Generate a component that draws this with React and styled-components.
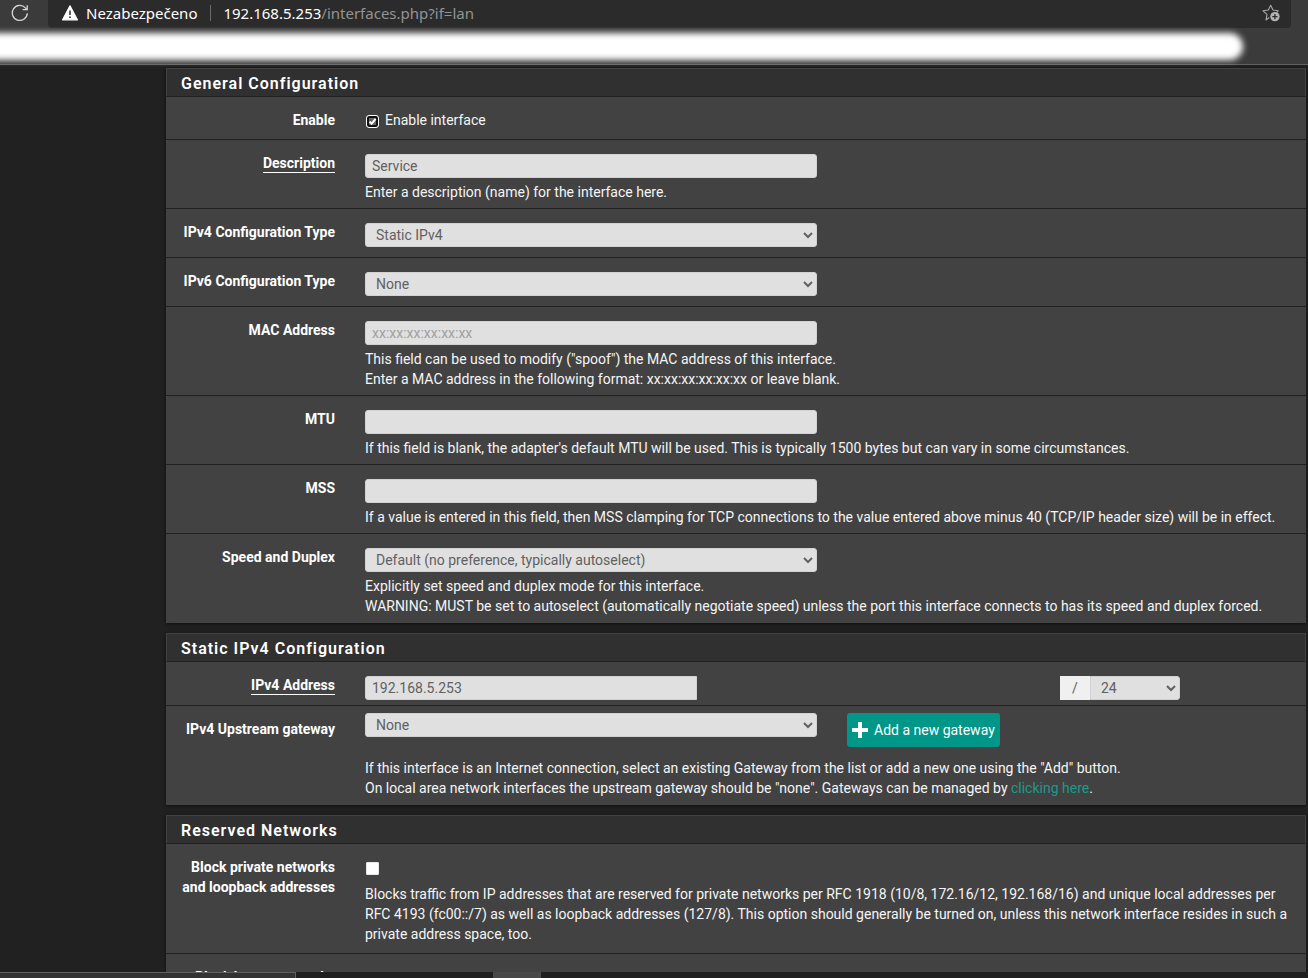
import { useState } from 'react';
import styled, { createGlobalStyle } from 'styled-components';

const App = () => {
  const [enabled, setEnabled] = useState(true);
  const [blockPrivate, setBlockPrivate] = useState(false);
  const [blockBogon, setBlockBogon] = useState(false);

  return (
    <Screen>
      <GlobalStyle />
      <Browser>
        <AddressRow>
          <ReloadBtn aria-label="Reload">
            <ReloadIcon />
          </ReloadBtn>
          <AddressBar>
            <WarningIcon />
            <Security>Nezabezpečeno</Security>
            <Url>
              <b>192.168.5.253</b>/interfaces.php?if=lan
            </Url>
            <StarBtn aria-label="Add to favorites">
              <StarIcon />
            </StarBtn>
          </AddressBar>
        </AddressRow>
        <BookmarkRow>
          <Smear />
        </BookmarkRow>
      </Browser>

      <Page>
        <Panel>
          <PanelTitle>General Configuration</PanelTitle>
          <Row>
            <Label as="span">Enable</Label>
            <CheckCell>
              <CheckLabel>
                <Checkbox
                  type="checkbox"
                  checked={enabled}
                  onChange={e => setEnabled(e.target.checked)}
                />
                {enabled && <CheckIcon />}
                Enable interface
              </CheckLabel>
            </CheckCell>
          </Row>
          <Row>
            <Label htmlFor="descr">
              <Required>Description</Required>
            </Label>
            <Cell>
              <Input id="descr" defaultValue="Service" />
            </Cell>
            <Help>Enter a description (name) for the interface here.</Help>
          </Row>
          <Row $bottom={10}>
            <Label htmlFor="type4">IPv4 Configuration Type</Label>
            <Cell>
              <Select id="type4">
                <option>Static IPv4</option>
              </Select>
            </Cell>
          </Row>
          <Row $bottom={10}>
            <Label htmlFor="type6">IPv6 Configuration Type</Label>
            <Cell>
              <Select id="type6">
                <option>None</option>
              </Select>
            </Cell>
          </Row>
          <Row>
            <Label htmlFor="mac">MAC Address</Label>
            <Cell>
              <Input id="mac" placeholder="xx:xx:xx:xx:xx:xx" />
            </Cell>
            <Help>
              This field can be used to modify ("spoof") the MAC address of this interface.
              <br />
              Enter a MAC address in the following format: xx:xx:xx:xx:xx:xx or leave blank.
            </Help>
          </Row>
          <Row>
            <Label htmlFor="mtu">MTU</Label>
            <Cell>
              <Input id="mtu" />
            </Cell>
            <Help>
              If this field is blank, the adapter's default MTU will be used. This is typically 1500
              bytes but can vary in some circumstances.
            </Help>
          </Row>
          <Row>
            <Label htmlFor="mss">MSS</Label>
            <Cell>
              <Input id="mss" />
            </Cell>
            <Help>
              If a value is entered in this field, then MSS clamping for TCP connections to the
              value entered above minus 40 (TCP/IP header size) will be in effect.
            </Help>
          </Row>
          <Row>
            <Label htmlFor="media">Speed and Duplex</Label>
            <Cell>
              <Select id="media">
                <option>Default (no preference, typically autoselect)</option>
              </Select>
            </Cell>
            <Help>
              Explicitly set speed and duplex mode for this interface.
              <br />
              WARNING: MUST be set to autoselect (automatically negotiate speed) unless the port
              this interface connects to has its speed and duplex forced.
            </Help>
          </Row>
        </Panel>

        <Panel>
          <PanelTitle>Static IPv4 Configuration</PanelTitle>
          <AddressFields>
            <Label htmlFor="ipaddr">
              <Required>IPv4 Address</Required>
            </Label>
            <Cell>
              <Input id="ipaddr" defaultValue="192.168.5.253" $square />
            </Cell>
            <SubnetCell>
              <Slash htmlFor="subnet">/</Slash>
              <Select id="subnet" $joined>
                <option>24</option>
              </Select>
            </SubnetCell>
          </AddressFields>
          <Row>
            <Label htmlFor="gateway">IPv4 Upstream gateway</Label>
            <Cell $top={7}>
              <Select id="gateway">
                <option>None</option>
              </Select>
            </Cell>
            <Cell $top={7}>
              <AddBtn>
                <PlusIcon />
                Add a new gateway
              </AddBtn>
            </Cell>
            <Help $gap={11}>
              If this interface is an Internet connection, select an existing Gateway from the list
              or add a new one using the "Add" button.
              <br />
              On local area network interfaces the upstream gateway should be "none". Gateways can
              be managed by <a href="#gateways">clicking here</a>.
            </Help>
          </Row>
        </Panel>

        <Panel>
          <PanelTitle>Reserved Networks</PanelTitle>
          <Row $bottom={9}>
            <Label htmlFor="blockpriv">
              Block private networks
              <br />
              and loopback addresses
            </Label>
            <BlockCell>
              <CheckLine>
                <Checkbox
                  id="blockpriv"
                  type="checkbox"
                  checked={blockPrivate}
                  onChange={e => setBlockPrivate(e.target.checked)}
                />
                {blockPrivate && <CheckIcon />}
              </CheckLine>
              <p>
                Blocks traffic from IP addresses that are reserved for private networks per RFC 1918
                (10/8, 172.16/12, 192.168/16) and unique local addresses per RFC 4193 (fc00::/7) as
                well as loopback addresses (127/8). This option should generally be turned on,
                unless this network interface resides in such a private address space, too.
              </p>
            </BlockCell>
          </Row>
          <Row $bottom={9}>
            <Label htmlFor="blockbogons">Block bogon networks</Label>
            <BlockCell>
              <CheckLine>
                <Checkbox
                  id="blockbogons"
                  type="checkbox"
                  checked={blockBogon}
                  onChange={e => setBlockBogon(e.target.checked)}
                />
                {blockBogon && <CheckIcon />}
              </CheckLine>
            </BlockCell>
          </Row>
        </Panel>
      </Page>

      <Taskbar>
        <SearchBox />
        <ActiveTask />
      </Taskbar>
    </Screen>
  );
};

export default App;

const ReloadIcon = () => (
  <svg width="18" height="18" viewBox="0 0 18 18" fill="none" stroke="#d6d6d6" strokeWidth="1.3">
    <path d="M16.3 9.2A7.5 7.5 0 1 1 14.4 3.9L16 5.6" />
    <path d="M16.2 1.2V5.7H11.6" />
  </svg>
);

const WarningIcon = () => (
  <svg width="16" height="16" viewBox="0 0 16 16">
    <path
      d="M8 .8 15.4 14.8H.6Z"
      fill="#fff"
      stroke="#fff"
      strokeWidth="1.2"
      strokeLinejoin="round"
    />
    <path d="M8 5.4V10" stroke="#2b2b2b" strokeWidth="1.5" />
    <circle cx="8" cy="12.2" r="0.9" fill="#2b2b2b" />
  </svg>
);

const StarIcon = () => (
  <svg width="18" height="18" viewBox="0 0 18 18" fill="none">
    <path
      d="M7.2 13.5 4 16l1-5.6L1 6.8l5.3-.8L8.7 1.2 11 6l5.2.8-1.6 1.8"
      stroke="#a6a6a6"
      strokeWidth="1.1"
      strokeLinejoin="round"
    />
    <circle cx="12.9" cy="12.6" r="4.7" fill="#b4b4b4" />
    <path d="M12.9 10v5.2M10.3 12.6h5.2" stroke="#2b2b2b" strokeWidth="1.3" />
  </svg>
);

const CheckIcon = () => (
  <CheckSvg viewBox="0 0 13 13" aria-hidden="true">
    <path d="M3.5 6.6 5.6 8.8 9.6 3.8" fill="none" stroke="#fff" strokeWidth="2" />
  </CheckSvg>
);

const PlusIcon = () => (
  <svg width="16" height="16" viewBox="0 0 16 16">
    <path d="M8 0V16M0 8H16" stroke="#fff" strokeWidth="4" />
  </svg>
);

const GlobalStyle = createGlobalStyle`
  * {
    box-sizing: border-box;
  }

  body {
    margin: 0;
    background: #212121;
    color: #f5f5f5;
    font-family: Roboto, 'Liberation Sans', sans-serif;
    font-size: 14px;
    line-height: 20px;
  }

  p {
    margin: 0;
  }

  button,
  input,
  select {
    font: inherit;
  }
`;

const Screen = styled.div`
  display: flex;
  flex-direction: column;
  height: 100vh;
  overflow: hidden;
`;

const Browser = styled.header`
  flex: none;
  background: #3b3b3b;
  border-bottom: 1px solid #606060;
`;

const AddressRow = styled.div`
  display: flex;
  height: 28px;
  padding-right: 17px;
`;

const ReloadBtn = styled.button`
  display: flex;
  justify-content: center;
  width: 48px;
  padding: 4px 8px 0 0;
  border: 0;
  background: none;
`;

const AddressBar = styled.div`
  display: flex;
  flex: 1;
  align-items: center;
  padding: 0 11px 2px 14px;
  background: #2b2b2b;
  border-radius: 0 0 4px 4px;
  font-family: 'Noto Sans', 'Open Sans', sans-serif;
  font-size: 15px;
`;

const Security = styled.span`
  margin-left: 8px;
  padding-right: 13px;
  border-right: 1px solid #6a6a6a;
  color: #fff;
  line-height: 16px;
`;

const Url = styled.span`
  flex: 1;
  margin-left: 12px;
  color: #939393;

  b {
    color: #fff;
    font-weight: 400;
  }
`;

const StarBtn = styled.button`
  display: flex;
  padding: 0;
  border: 0;
  background: none;
`;

const BookmarkRow = styled.div`
  height: 36px;
  padding: 5px 65px 0 0;
`;

const Smear = styled.div`
  height: 27px;
  margin-left: -20px;
  background: #fff;
  border-radius: 14px;
  filter: blur(3px);
`;

const Page = styled.main`
  flex: 1;
  min-height: 0;
  overflow: hidden;
  padding: 3px 2px 0 166px;
`;

const Panel = styled.section`
  margin-bottom: 10px;
  background: #424242;
  box-shadow: 0 1px 4px rgba(0, 0, 0, 0.6);
`;

const PanelTitle = styled.h2`
  margin: 0;
  padding: 5px 14px 3px;
  border: 1px solid #424242;
  border-bottom-color: #212121;
  background: #303030;
  color: #fff;
  font-size: 16px;
  font-weight: 600;
  letter-spacing: 1px;
  line-height: 19px;
`;

const Row = styled.div`
  display: grid;
  grid-template-columns: 184fr 482fr 474fr;
  padding-bottom: ${props => props.$bottom ?? 6}px;
  border-bottom: 1px solid #212121;

  &:last-child {
    border-bottom-color: #424242;
  }
`;

const AddressFields = styled(Row)`
  grid-template-columns: 184fr 362fr 333fr 150fr 111fr;
  padding-bottom: 5px;
`;

const Label = styled.label`
  padding: 13px 15px 0 0;
  color: #fff;
  font-weight: 700;
  text-align: right;
  white-space: nowrap;
`;

const Required = styled.span`
  display: inline-block;
  border-bottom: 1px solid #fff;
  line-height: 17px;
`;

const Cell = styled.div`
  padding: ${props => props.$top ?? 14}px 15px 0;
`;

const CheckCell = styled(Cell)`
  padding-top: 13px;
  padding-bottom: 3px;
`;

const CheckLabel = styled.label`
  position: relative;
  display: flex;
  align-items: center;
  gap: 6px;
`;

const CheckLine = styled.div`
  position: relative;
  display: flex;
  align-items: center;
  height: 18px;
  margin-bottom: 8px;
`;

const Checkbox = styled.input`
  appearance: none;
  width: 13px;
  height: 13px;
  margin: 2px 0 0 1px;
  border: 1px solid #e8e8e8;
  border-radius: 1px;
  background: #fff;

  &:checked {
    border: 1px solid #fff;
    border-radius: 3px;
    background: #666;
    box-shadow: inset 0 0 0 2px #111;
  }
`;

const CheckSvg = styled.svg`
  position: absolute;
  left: 1px;
  top: 5px;
  width: 13px;
  height: 13px;
  pointer-events: none;
`;

const BlockCell = styled.div`
  grid-column: 2 / -1;
  padding: 14px 15px 0;
`;

const Input = styled.input`
  display: block;
  width: 100%;
  height: 24px;
  padding: 2px 6px;
  border: 1px solid #d2d2d2;
  border-radius: ${props => (props.$square ? '3px 0 0 3px' : '3px')};
  background: #e0e0e0;
  color: #616161;

  &::placeholder {
    color: #a0a0a0;
  }
`;

const Select = styled.select`
  display: block;
  width: 100%;
  height: 24px;
  padding: 0 6px;
  border: 1px solid #d2d2d2;
  border-radius: ${props => (props.$joined ? '0 3px 3px 0' : '3px')};
  background-color: #e0e0e0;
  color: #616161;
`;

const SubnetCell = styled(Cell)`
  display: flex;
  grid-column: 4;
`;

const Slash = styled.label`
  flex: none;
  width: 30px;
  height: 24px;
  padding-top: 2px;
  background: #f0f0f0;
  color: #616161;
  text-align: center;
`;

const AddBtn = styled.button`
  display: flex;
  align-items: center;
  gap: 6px;
  height: 34px;
  padding: 0 5px;
  border: 0;
  border-radius: 3px;
  background: #009688;
  color: #fff;
  white-space: nowrap;
`;

const Help = styled.div`
  grid-column: 2 / -1;
  padding: ${props => props.$gap ?? 4}px 15px 0;

  a {
    color: #1a9a8a;
    text-decoration: none;
  }
`;

const Taskbar = styled.footer`
  display: flex;
  flex: none;
  height: 6px;
  background: #1f1f1f;
`;

const SearchBox = styled.div`
  width: 296px;
  border: 1px solid #606060;
  border-width: 1px 1px 0 0;
  background: #333;
`;

const ActiveTask = styled.div`
  width: 48px;
  margin-left: 197px;
  border-right: 3px double #4a4a4a;
  background: #484848;
`;
